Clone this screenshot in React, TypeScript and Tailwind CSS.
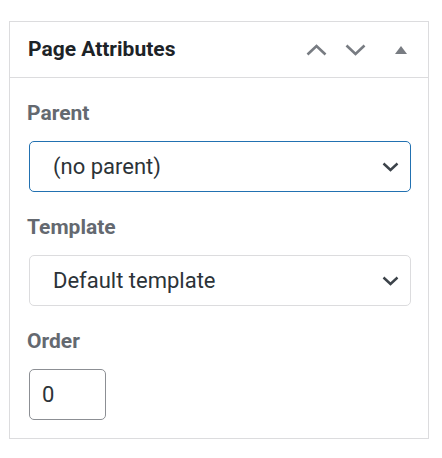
// header controls: move up / move down / toggle
function HeaderControls() {
  return (
    <div className="flex items-center text-[#787c82]">
      <button className="w-[40px] h-[36px] flex items-center justify-center">
        <svg width="21" height="12" viewBox="0 0 21 12" fill="none">
          <path d="M1.5 10.5 L10.5 2 L19.5 10.5" stroke="currentColor" strokeWidth="2.6" />
        </svg>
      </button>
      <button className="w-[38px] h-[36px] flex items-center justify-center">
        <svg width="21" height="12" viewBox="0 0 21 12" fill="none">
          <path d="M1.5 1.5 L10.5 10 L19.5 1.5" stroke="currentColor" strokeWidth="2.6" />
        </svg>
      </button>
      <button className="w-[54px] h-[36px] flex items-center justify-center">
        <svg width="12" height="8" viewBox="0 0 12 8">
          <path d="M6 0 L12 8 L0 8 Z" fill="currentColor" />
        </svg>
      </button>
    </div>
  );
}

function SelectChevron() {
  return (
    <svg width="17" height="10" viewBox="0 0 17 10" fill="none" className="text-[#3c434a]">
      <path d="M1.5 1.5 L8.5 8 L15.5 1.5" stroke="currentColor" strokeWidth="2.4" />
    </svg>
  );
}

function SelectBox({ value, focused }: { value: string; focused?: boolean }) {
  return (
    <div
      className={
        focused
          ? 'h-[51px] flex items-center justify-between rounded-[5px] border border-[#2271b1] pl-[23px] pr-[11px] bg-white'
          : 'h-[51px] flex items-center justify-between rounded-[5px] border border-[#dcdcde] pl-[23px] pr-[11px] bg-white'
      }
    >
      <span className="text-[22px] text-[#2c3338]">{value}</span>
      <SelectChevron />
    </div>
  );
}

export default function App() {
  return (
    <div className="bg-white min-h-screen pt-[21px] pl-[9px] pr-[13px]" style={{ fontFamily: 'Roboto, sans-serif' }}>
      <div className="w-[420px] border border-[#dcdcde] bg-white">
        <div className="h-[56px] flex items-center justify-between border-b border-[#dcdcde] pl-[18px]">
          <h2 className="text-[21px] font-bold text-[#1d2327]">Page Attributes</h2>
          <HeaderControls />
        </div>

        <div className="pt-[23px] pb-[18px] pl-[19px] pr-[17px]">
          <label className="block -ml-[2px] text-[21px] leading-[24px] font-bold text-[#646970]">Parent</label>
          <div className="mt-[16px]">
            <SelectBox value="(no parent)" focused />
          </div>

          <label className="block -ml-[2px] mt-[23px] text-[21px] leading-[24px] font-bold text-[#646970]">Template</label>
          <div className="mt-[16px]">
            <SelectBox value="Default template" />
          </div>

          <label className="block -ml-[2px] mt-[23px] text-[21px] leading-[24px] font-bold text-[#646970]">Order</label>
          <div className="mt-[16px] w-[77px] h-[51px] flex items-center rounded-[5px] border border-[#8c8f94] pl-[12px]">
            <span className="text-[22px] text-[#2c3338]">0</span>
          </div>
        </div>
      </div>
    </div>
  );
}
